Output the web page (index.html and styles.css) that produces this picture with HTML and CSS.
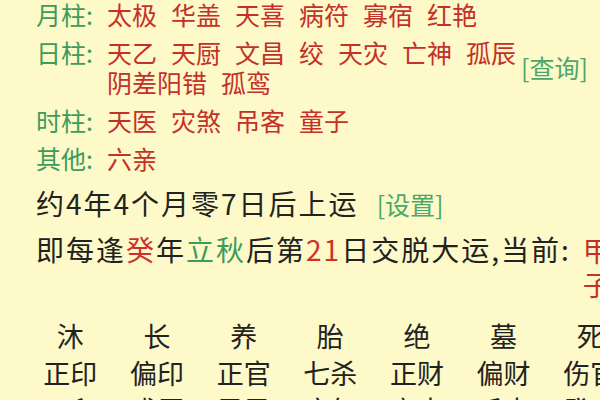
FILE: index.html
```html
<!DOCTYPE html>
<html lang="zh-CN">
<head>
<meta charset="utf-8">
<link rel="stylesheet" href="styles.css">
</head>
<body>
<div class="page">
  <div class="shensha">
    <div class="row">
      <span class="lbl">月柱:</span>
      <div class="vals"><span>太极</span><span>华盖</span><span>天喜</span><span>病符</span><span>寡宿</span><span>红艳</span></div>
    </div>
    <div class="row">
      <span class="lbl">日柱:</span>
      <div class="vals narrow"><span>天乙</span><span>天厨</span><span>文昌</span><span>绞</span><span>天灾</span><span>亡神</span><span>孤辰</span><span>阴差阳错</span><span>孤鸾</span></div>
      <span class="link query">[查询]</span>
    </div>
    <div class="row">
      <span class="lbl">时柱:</span>
      <div class="vals"><span>天医</span><span>灾煞</span><span>吊客</span><span>童子</span></div>
    </div>
    <div class="row">
      <span class="lbl">其他:</span>
      <div class="vals"><span>六亲</span></div>
    </div>
  </div>
  <p class="yun">约4年4个月零7日后上运<span class="link set">[设置]</span></p>
  <div class="jiao">
    <p class="jtext">即每逢<span class="r">癸</span>年<span class="g">立秋</span>后第<span class="r">21</span>日交脱大运,当前:</p>
    <div class="cur"><span>甲</span><span>子</span></div>
  </div>
  <div class="grid">
    <span>沐</span><span>长</span><span>养</span><span>胎</span><span>绝</span><span>墓</span><span>死</span>
    <span>正印</span><span>偏印</span><span>正官</span><span>七杀</span><span>正财</span><span>偏财</span><span>伤官</span>
    <span>丁卯</span><span>戊辰</span><span>己巳</span><span>庚午</span><span>辛未</span><span>壬申</span><span>癸酉</span>
  </div>
</div>
</body>
</html>
```
FILE: styles.css
```css
html, body {
  margin: 0;
  padding: 0;
  background: #fdf9c8;
  overflow: hidden;
  width: 600px;
  height: 400px;
}
.page {
  font-family: "Noto Sans CJK SC", "Noto Sans", sans-serif;
  color: #222;
  padding-left: 36px;
  width: 700px;
}
.shensha {
  display: flex;
  flex-direction: column;
  gap: 10px;
}
.row {
  display: flex;
  align-items: center;
  font-size: 25px;
  line-height: 28px;
}
.lbl {
  color: #3c9c5c;
  width: 71px;
  flex: none;
  align-self: flex-start;
}
.vals {
  display: flex;
  flex-wrap: wrap;
  column-gap: 14px;
  row-gap: 2px;
  color: #c4302a;
}
.vals.narrow {
  width: 412px;
}
.link {
  color: #4aa86a;
  font-size: 25px;
  letter-spacing: 0;
}
.query {
  margin-left: 2px;
}
.yun {
  margin: 15px 0 0;
  font-size: 28px;
  line-height: 32px;
  letter-spacing: 2px;
}
.set {
  margin-left: 18px;
}
.jiao {
  display: flex;
  gap: 12px;
  margin-top: 13px;
}
.jtext {
  margin: 0;
  font-size: 28px;
  line-height: 32px;
  letter-spacing: 2px;
}
.cur {
  display: flex;
  flex-direction: column;
  color: #c4302a;
  font-size: 28px;
  line-height: 34px;
}
.r { color: #d0302a; }
.g { color: #3c9c5c; }
.grid {
  margin-left: -9px;
  margin-top: 16px;
  display: grid;
  grid-template-columns: repeat(7, 86.67px);
  font-size: 27px;
  line-height: 37px;
  text-align: center;
}
```
